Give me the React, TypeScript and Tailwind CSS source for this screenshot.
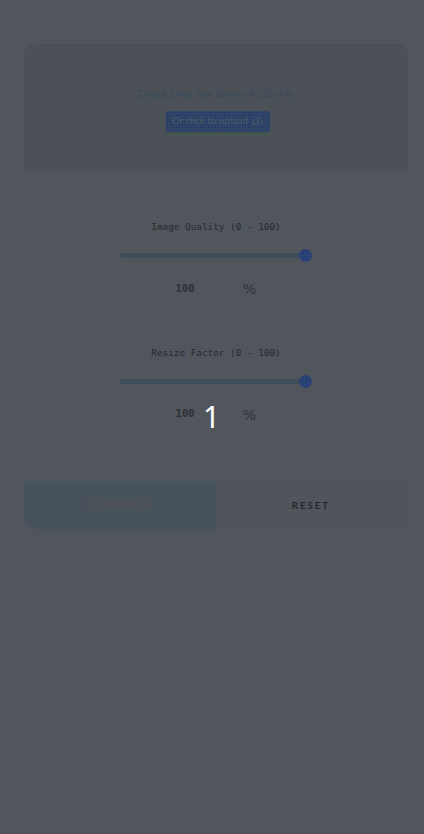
import React from 'react';

function Control({ label, className, valueGap, unitPad }: { label: string; className: string; valueGap: string; unitPad: string }) {
  return (
    <section className={`flex flex-col items-center ${className}`}>
      <label className="h-4 whitespace-pre font-['DejaVu_Sans_Mono',monospace] text-[9.35px] leading-4 text-[#262a2f]">{label}</label>
      <div className="mt-[13px] flex h-[14px] w-48 items-center">
        <div className="h-[5px] min-w-0 flex-1 rounded-l-full bg-[#3f4f59] bg-[radial-gradient(#344955_0.6px,transparent_0.7px)] bg-[size:3px_3px]" />
        <div className="h-[13px] w-[13px] shrink-0 rounded-full bg-[#2c4376] bg-[radial-gradient(#1d3478_0.7px,transparent_0.8px)] bg-[size:3px_3px]" />
      </div>
      <div className={`${valueGap} flex h-6 w-[88px] items-start justify-between`}>
        <span className="pl-[3.5px] font-['DejaVu_Sans_Mono',monospace] text-[10.6px] font-bold leading-6 text-[#2c3036]">100</span>
        <span className={`${unitPad} pr-[4px] font-['DejaVu_Sans',sans-serif] text-[14px] leading-6 text-[#30343a]`}>%</span>
      </div>
    </section>
  );
}

function UploadIcon() {
  return (
    <svg className="h-[9px] w-3" viewBox="0 0 24 18" fill="none" stroke="currentColor" strokeWidth="2" strokeLinecap="round" strokeLinejoin="round">
      <path d="M7 15H5a4 4 0 0 1 0-8 7 7 0 0 1 13-1 5 5 0 0 1 1 9h-2M12 16V8m-3 3 3-3 3 3" />
    </svg>
  );
}

export default function App() {
  return (
    <div className="relative h-[834px] w-full overflow-hidden border-b border-[#554f5a] bg-[#51555d] px-4 pt-[44px]">
      <main className="ml-2 h-[485px] w-[384px] overflow-hidden rounded-xl bg-[#51555c]">
        <section className="flex h-[127px] flex-col items-center bg-[#4b5157]">
          <div className="h-px w-[362px] shrink-0 bg-[repeating-linear-gradient(90deg,#314858_0_1px,transparent_1px_5px)]" />
          <p className="mt-[41px] h-4 whitespace-nowrap font-['Lato',sans-serif] text-[9.6px] leading-4 tracking-[0.04px] text-[#364b5b]">Drag &amp; Drop Your Banner Ad Zip File</p>
          <button className="ml-1 mt-[9px] flex h-[22px] w-[104px] items-center justify-center gap-1 whitespace-nowrap rounded-[3px] border-b border-[#3b534e] bg-[#2f4466] bg-[radial-gradient(#1e3570_0.7px,transparent_0.8px)] bg-[size:3px_3px] font-['Lato',sans-serif] text-[9.6px] tracking-[0.1px] text-[#456068] shadow-[0_3px_3px_#4a5455]">
            Or click to upload
            <UploadIcon />
          </button>
          <div className="mt-auto h-px w-full shrink-0 bg-[repeating-linear-gradient(90deg,#314858_0_1px,transparent_1px_5px)]" />
        </section>

        <Control label="Image Quality (0 - 100)" className="mt-12" valueGap="mt-[14px]" unitPad="pt-px" />
        <Control label="Resize Factor (0 - 100)" className="mt-[45px]" valueGap="mt-[13px]" unitPad="pt-[2px]" />

        <footer className="mt-[56px] flex h-12 font-['Lato',sans-serif] text-[9.6px]">
          <button className="w-1/2 bg-[#48525b] pt-px font-bold tracking-[2.2px] text-[#565156]">COMPRESS</button>
          <button className="w-1/2 bg-[#50545b] pr-[2px] pt-px text-[9.8px] font-bold tracking-[1.9px] text-[#24282d]">RESET</button>
        </footer>
      </main>

      <div className="pointer-events-none absolute inset-0 flex items-center justify-center pr-px">
        <span className="font-['Noto_Sans',sans-serif] text-[30px] leading-none text-white">1</span>
      </div>
    </div>
  );
}
